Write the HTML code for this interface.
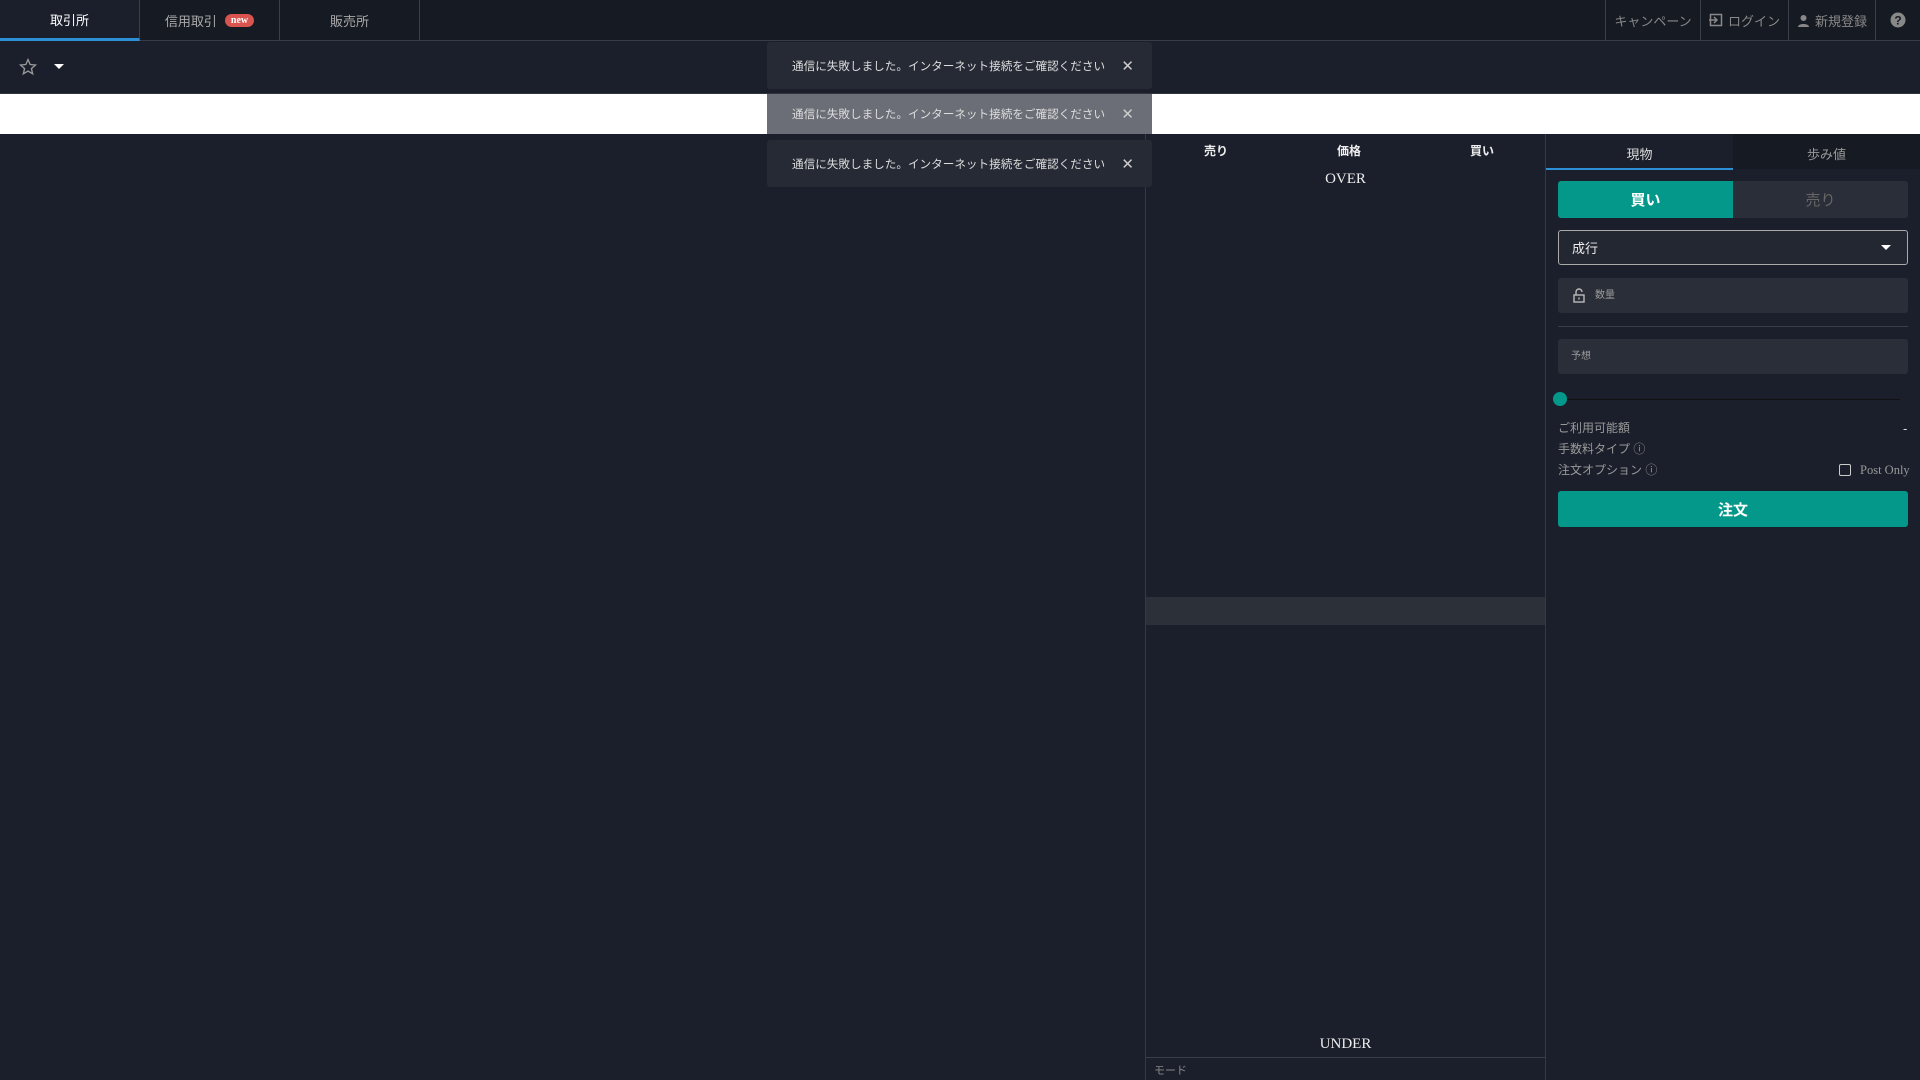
<!DOCTYPE html>
<html><head><meta charset="utf-8"><style>
*{box-sizing:border-box;margin:0;padding:0}
body{width:1920px;height:1080px;background:#1b1f2b;font-family:"Liberation Sans","Noto Sans CJK JP",sans-serif;color:#ddd;position:relative;overflow:hidden;font-size:13px}
.abs{position:absolute}
.nav{left:0;top:0;width:1920px;height:41px;background:#161a22;border-bottom:1px solid #383c46}
.tab{top:0;height:40px;width:140px;border-right:1px solid #3a3e48;display:flex;align-items:center;justify-content:center;color:#aaa;font-size:13px}
.rn{top:0;height:40px;border-left:1px solid #3a3e48;display:flex;align-items:center;justify-content:center;color:#888;font-size:13px;gap:5px}
.toast{left:767px;width:385px;height:47px;background:#262a35;border-radius:3px;display:flex;align-items:center;padding-left:25px;font-size:11.6px;color:#ddd}
.toast .x{position:absolute;right:18px;top:50%;transform:translateY(-50%);font-size:15px;color:#ccc}
.inp{left:1558px;width:350px;background:#2a2e38;border-radius:3px}
.lbl{left:1558px;color:#999;font-size:12px}
</style></head><body>
<div class="abs nav"></div>
<div class="abs tab" style="left:0;background:#1b1f2b;color:#fff;border-bottom:3px solid #2d8fd5;height:41px">取引所</div>
<div class="abs tab" style="left:140px">信用取引<span style="margin-left:8px;background:#d9534f;color:#fff;font-size:10px;font-weight:bold;border-radius:8px;padding:1px 6px;font-family:'Liberation Serif',serif">new</span></div>
<div class="abs tab" style="left:280px">販売所</div>
<div class="abs rn" style="left:1605px;width:95px">キャンペーン</div>
<div class="abs rn" style="left:1700px;width:88px"><svg width="14" height="14" viewBox="0 0 14 14"><rect x="1.5" y="1.5" width="11" height="11" fill="none" stroke="#888" stroke-width="1.5"/><path d="M0 7h8M5 4l3 3-3 3" stroke="#888" stroke-width="1.5" fill="none"/></svg>ログイン</div>
<div class="abs rn" style="left:1788px;width:87px"><svg width="13" height="13" viewBox="0 0 13 13"><circle cx="6.5" cy="4" r="3" fill="#888"/><path d="M1 13c0-4 11-4 11 0z" fill="#888"/></svg>新規登録</div>
<div class="abs rn" style="left:1875px;width:45px"><svg width="16" height="16" viewBox="0 0 16 16"><circle cx="8" cy="8" r="7.5" fill="#888"/><text x="8" y="12.5" text-anchor="middle" font-size="12" font-weight="bold" fill="#161a22" font-family="Liberation Sans">?</text></svg></div>
<svg class="abs" style="left:18px;top:57px" width="20" height="20" viewBox="0 0 24 24"><path d="M12 3l2.6 6 6.4.6-4.9 4.3 1.5 6.3L12 16.9 6.4 20.2l1.5-6.3L3 9.6l6.4-.6z" fill="none" stroke="#999" stroke-width="1.6"/></svg>
<div class="abs" style="left:54px;top:64px;border-left:5px solid transparent;border-right:5px solid transparent;border-top:5px solid #fff"></div>
<div class="abs" style="left:0;top:93px;width:1920px;height:1px;background:#30343d"></div>
<div class="abs" style="left:0;top:94px;width:1920px;height:40px;background:#fff"></div>
<!-- orderbook -->
<div class="abs" style="left:1145px;top:134px;width:1px;height:946px;background:#353944"></div>
<div class="abs" style="left:1545px;top:134px;width:1px;height:946px;background:#353944"></div>
<div class="abs" style="left:1204px;top:142px;color:#eee;font-size:12px;font-weight:bold">売り</div>
<div class="abs" style="left:1337px;top:142px;color:#eee;font-size:12px;font-weight:bold">価格</div>
<div class="abs" style="left:1470px;top:142px;color:#eee;font-size:12px;font-weight:bold">買い</div>
<div class="abs" style="left:1146px;width:399px;top:171px;text-align:center;font-family:'Liberation Serif',serif;font-size:15px;color:#eee">OVER</div>
<div class="abs" style="left:1146px;width:399px;top:597px;height:28px;background:#2c3039"></div>
<div class="abs" style="left:1146px;width:399px;top:1036px;text-align:center;font-family:'Liberation Serif',serif;font-size:15px;color:#eee">UNDER</div>
<div class="abs" style="left:1146px;width:399px;top:1057px;height:1px;background:#3a3e48"></div>
<div class="abs" style="left:1154px;top:1062px;color:#888;font-size:11px">モード</div>
<!-- right panel -->
<div class="abs" style="left:1733px;top:134px;width:187px;height:35px;background:#161a22"></div>
<div class="abs" style="left:1546px;top:168px;width:187px;height:2px;background:#2d8fd5"></div>
<div class="abs" style="left:1546px;top:144px;width:187px;text-align:center;color:#ddd">現物</div>
<div class="abs" style="left:1733px;top:144px;width:187px;text-align:center;color:#999">歩み値</div>
<div class="abs" style="left:1558px;top:181px;width:175px;height:37px;background:#03988a;border-radius:3px 0 0 3px;color:#fff;font-weight:bold;font-size:15px;display:flex;align-items:center;justify-content:center">買い</div>
<div class="abs" style="left:1733px;top:181px;width:175px;height:37px;background:#2a2e38;border-radius:0 3px 3px 0;color:#666;font-size:15px;display:flex;align-items:center;justify-content:center">売り</div>
<div class="abs" style="left:1558px;top:230px;width:350px;height:35px;border:1px solid #aaa;border-radius:3px;background:#232731;color:#eee;padding:0 13px;display:flex;align-items:center">成行</div>
<div class="abs" style="left:1881px;top:245px;border-left:5px solid transparent;border-right:5px solid transparent;border-top:5px solid #fff"></div>
<div class="abs inp" style="top:278px;height:35px"></div>
<svg class="abs" style="left:1573px;top:288px" width="12" height="15" viewBox="0 0 12 15"><path d="M3 7V4a3 3 0 0 1 6 0" fill="none" stroke="#bbb" stroke-width="1.4"/><rect x="1" y="7" width="10" height="7" fill="none" stroke="#bbb" stroke-width="1.4"/><rect x="5.3" y="9.5" width="1.4" height="2" fill="#bbb"/></svg>
<div class="abs" style="left:1595px;top:289px;color:#999;font-size:10px;line-height:13px">数量</div>
<div class="abs" style="left:1558px;top:326px;width:350px;height:1px;background:#3a3e48"></div>
<div class="abs inp" style="top:339px;height:35px"></div>
<div class="abs" style="left:1571px;top:350px;color:#999;font-size:10px;line-height:13px">予想</div>
<div class="abs" style="left:1565px;top:399px;width:335px;height:1px;background:#111"></div>
<div class="abs" style="left:1553px;top:392px;width:14px;height:14px;border-radius:50%;background:#03988a"></div>
<div class="abs lbl" style="top:421px;line-height:15px">ご利用可能額</div>
<div class="abs" style="left:1903px;top:421px;color:#ddd;line-height:15px">-</div>
<div class="abs lbl" style="top:442px;line-height:15px">手数料タイプ ⓘ</div>
<div class="abs lbl" style="top:463px;line-height:15px">注文オプション ⓘ</div>
<div class="abs" style="left:1839px;top:464px;width:12px;height:12px;border:1px solid #ccc;border-radius:2px"></div>
<div class="abs" style="left:1860px;top:463px;color:#999;font-family:'Liberation Serif',serif;font-size:12.5px;line-height:15px">Post Only</div>
<div class="abs" style="left:1558px;top:491px;width:350px;height:36px;background:#03988a;border-radius:3px;color:#fff;font-weight:bold;font-size:15px;display:flex;align-items:center;justify-content:center">注文</div>
<!-- toasts -->
<div class="abs toast" style="top:42px">通信に失敗しました。インターネット接続をご確認ください<span class="x">✕</span></div>
<div class="abs toast" style="top:94px;height:40px;background:#6b6e76;border-radius:0">通信に失敗しました。インターネット接続をご確認ください<span class="x">✕</span></div>
<div class="abs toast" style="top:140px">通信に失敗しました。インターネット接続をご確認ください<span class="x">✕</span></div>
</body></html>
